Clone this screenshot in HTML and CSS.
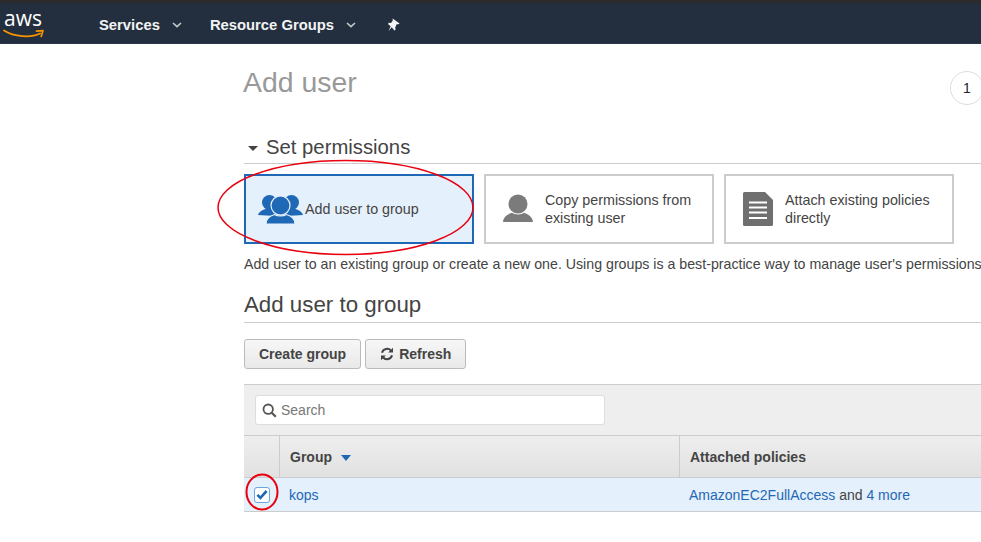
FILE: index.html
```html
<!DOCTYPE html>
<html lang="en">
<head>
    <meta charset="UTF-8">
    <meta name="viewport" content="width=device-width, initial-scale=1.0">
    <title>Add user</title>
    <link rel="stylesheet" href="styles.css">
</head>
<body>

    <nav class="topbar">
        <div class="logo">
            <span class="logo-text">aws</span>
            <svg class="logo-smile" width="42" height="11" viewBox="0 0 42 11">
                <path d="M1 2.5C11 9 28 10 37 5.5" fill="none" stroke="#f79400" stroke-width="1.8" stroke-linecap="round"/>
                <path d="M33.5 3.2L40 2.6L38.2 8.4" fill="none" stroke="#f79400" stroke-width="1.7" stroke-linecap="round" stroke-linejoin="round"/>
            </svg>
        </div>
        <a class="nav-item nav-services">Services
            <svg class="nav-caret" width="10" height="6" viewBox="0 0 10 6"><path d="M1 1l4 3.6L9 1" fill="none" stroke="#c6c9cc" stroke-width="1.6"/></svg>
        </a>
        <a class="nav-item nav-groups">Resource Groups
            <svg class="nav-caret" width="10" height="6" viewBox="0 0 10 6"><path d="M1 1l4 3.6L9 1" fill="none" stroke="#c6c9cc" stroke-width="1.6"/></svg>
        </a>
        <svg class="nav-pin" width="14" height="14" viewBox="0 0 14 14"><path d="M5.6 .6L12.6 5.4L11 6.4L9.8 6L8.2 9.4L8.6 11.6L7.4 12.4L4.7 9.2L1.6 13L3.6 8.2L1 5.9L1.8 4.8L4 5L5.8 2.6z" fill="#f4f5f6"/></svg>
    </nav>

    <main class="content">
        <div class="title-row">
            <h1>Add user</h1>
            <div class="step">1</div>
        </div>

        <h2 class="section-title"><span class="section-caret"></span>Set permissions</h2>

        <div class="options">
            <div class="option option-active">
                <svg class="icon-group" width="45" height="30" viewBox="0 0 45 30">
                    <g fill="#1f68b5">
                        <circle cx="11.500" cy="8.500" r="7.500"/>
                        <circle cx="33.500" cy="8.500" r="7.500"/>
                        <path d="M0 21C1.500 17 5 15.500 9 14.500L15 14.500L22 22L8 21.500z"/>
                        <path d="M45 21C43.500 17 40 15.500 36 14.500L30 14.500L23 22L37 21.500z"/>
                    </g>
                    <circle cx="22.500" cy="11.500" r="9.500" fill="#1f68b5" stroke="#e4f0fb" stroke-width="1.200"/>
                    <path d="M8 30C8 25 11.500 22 16.500 20.500C19.500 22.500 25.500 22.500 28.500 20.500C33.500 22 37 25 37 30z" fill="#1f68b5" stroke="#e4f0fb" stroke-width="1.200"/>
                </svg>
                <span class="option-label-tight">Add user to group</span>
            </div>
            <div class="option">
                <svg class="icon-user" width="30" height="30" viewBox="0 0 30 30">
                    <circle cx="15" cy="10" r="9.500" fill="#7b7b7b"/>
                    <path d="M0 28C.5 23 4 20.500 9 18.700C12 21 18 21 21 18.700C26 20.500 29.500 23 30 28z" fill="#7b7b7b"/>
                </svg>
                <span class="option-label">Copy permissions from existing user</span>
            </div>
            <div class="option">
                <svg class="icon-doc" width="30" height="34" viewBox="0 0 30 34">
                    <path d="M1.500 0H22L30 8V32.500A1.500 1.500 0 0 1 28.500 34H1.500A1.500 1.500 0 0 1 0 32.500V1.500A1.500 1.500 0 0 1 1.500 0z" fill="#6f6f6f"/>
                    <path d="M6 10.500H24M6 15.500H24M6 20.500H24M6 26H24" stroke="#fff" stroke-width="2"/>
                </svg>
                <span class="option-label">Attach existing policies directly</span>
            </div>
        </div>

        <p class="description">Add user to an existing group or create a new one. Using groups is a best-practice way to manage user's permissions</p>

        <h2 class="group-title">Add user to group</h2>

        <div class="actions">
            <button class="btn" type="button">Create group</button>
            <button class="btn" type="button">
                <svg class="icon-refresh" width="14" height="14" viewBox="0 0 14 14"><path d="M2 5.800A5.200 5.200 0 0 1 11 3.600M12 8.200A5.200 5.200 0 0 1 3 10.400" fill="none" stroke="#444" stroke-width="2"/><path d="M13 .8V5.600H8.200zM1 13.200V8.400H5.800z" fill="#444"/></svg>
                Refresh
            </button>
        </div>

        <div class="table">
            <div class="table-toolbar">
                <div class="search">
                    <svg width="15" height="15" viewBox="0 0 15 15"><circle cx="6.200" cy="6.200" r="4.700" fill="none" stroke="#555" stroke-width="1.800"/><path d="M9.700 9.700L13.800 13.800" stroke="#555" stroke-width="2.200"/></svg>
                    <span>Search</span>
                </div>
            </div>
            <div class="table-row table-head">
                <div class="cell cell-check"></div>
                <div class="cell">Group <span class="sort-caret"></span></div>
                <div class="cell">Attached policies</div>
            </div>
            <div class="table-row table-body">
                <div class="cell cell-check">
                    <span class="checkbox">
                        <svg width="12" height="11" viewBox="0 0 12 11"><path d="M1.400 5.800L4.400 8.800L10.600 2" fill="none" stroke="#1f68b5" stroke-width="2.600"/></svg>
                    </span>
                </div>
                <div class="cell"><a class="link">kops</a></div>
                <div class="cell"><a class="link">AmazonEC2FullAccess</a> and <a class="link">4 more</a></div>
            </div>
        </div>
    </main>

    <!-- red marks drawn on top of the screenshot -->
    <svg class="marks" width="981" height="542" viewBox="0 0 981 542">
        <ellipse cx="345.500" cy="207.500" rx="127.500" ry="47" fill="none" stroke="#e8000f" stroke-width="1.500"/>
        <ellipse cx="262" cy="492" rx="15.500" ry="17.500" fill="none" stroke="#e8000f" stroke-width="2"/>
    </svg>

</body>
</html>
```

FILE: styles.css
```css
* {
    margin: 0;
    padding: 0;
    box-sizing: border-box;
}

html, body {
    height: 100%;
    overflow: hidden;
}

body {
    background: #fff;
    color: #444;
    font-family: "Liberation Sans", Arial, sans-serif;
    font-size: 14px;
}

/* top bar */
.topbar {
    display: flex;
    align-items: center;
    height: 44px;
    padding: 3px 0 0 3px;
    background: #232f3e;
    border-top: 3px solid #2b2b2b;
    border-bottom: 1px solid #2a3644;
    color: #f2f3f4;
}

.logo {
    position: relative;
    width: 42px;
    height: 34px;
    margin-bottom: 4px;
}

.logo-text {
    display: block;
    padding-left: 1px;
    font-family: "Open Sans", sans-serif;
    font-size: 21px;
    line-height: 24px;
    color: #fff;
}

.logo-smile {
    display: block;
    margin-top: -2px;
}

.nav-item {
    display: flex;
    align-items: center;
    font-size: 14.800px;
    font-weight: bold;
}

.nav-services {
    margin-left: 54px;
}

.nav-groups {
    margin-left: 28px;
}

.nav-caret {
    margin-left: 12px;
}

.nav-pin {
    margin-left: 31px;
}

/* main column */
.content {
    width: 800px;
    margin-left: 244px;
}

.title-row {
    display: flex;
    align-items: flex-start;
    justify-content: space-between;
    height: 85px;
    padding-top: 21px;
}

h1 {
    margin-left: -1px;
    font-size: 28.400px;
    font-weight: normal;
    line-height: 34px;
    color: #999;
}

.step {
    width: 34px;
    height: 34px;
    margin: 6px 60px 0 0;
    border: 1px solid #ddd;
    border-radius: 50%;
    color: #222;
    font-size: 14px;
    line-height: 32px;
    text-align: center;
}

.section-title {
    display: flex;
    align-items: center;
    height: 35px;
    padding-top: 3px;
    border-bottom: 1px solid #ccc;
    font-size: 20.300px;
    font-weight: normal;
    color: #444;
}

.section-caret {
    width: 0;
    height: 0;
    margin: 2px 8px 0 4px;
    border-top: 5px solid #444;
    border-left: 5px solid transparent;
    border-right: 5px solid transparent;
}

.options {
    display: flex;
    gap: 10px;
    margin-top: 10px;
}

.option {
    display: flex;
    align-items: center;
    width: 230px;
    height: 70px;
    padding-left: 17px;
    border: 2px solid #ccc;
    font-size: 14.300px;
    line-height: 18px;
}

.option-active {
    padding-left: 12px;
    border-color: #1f68b5;
    background: #e4f0fb;
}

.option-label {
    width: 160px;
    margin-left: 12px;
}

.option-label-tight {
    margin-left: 2px;
}

.description {
    margin-top: 12px;
    font-size: 14.200px;
    line-height: 17px;
    white-space: nowrap;
}

.group-title {
    height: 35px;
    margin-top: 15px;
    border-bottom: 1px solid #ccc;
    font-size: 22.300px;
    font-weight: normal;
    line-height: 34px;
}

.actions {
    display: flex;
    gap: 4px;
    margin-top: 16px;
}

.btn {
    display: flex;
    align-items: center;
    gap: 5px;
    height: 30px;
    padding: 0 14px;
    border: 1px solid #bbb;
    border-radius: 3px;
    background: linear-gradient(#f7f7f7, #e9e9e9);
    color: #444;
    font-family: inherit;
    font-size: 14px;
    font-weight: bold;
}

.table {
    margin-top: 15px;
    border-top: 1px solid #ccc;
}

.table-toolbar {
    height: 50px;
    padding: 10px 11px;
    background: #eee;
}

.search {
    display: flex;
    align-items: center;
    gap: 4px;
    width: 350px;
    height: 30px;
    padding-left: 6px;
    background: #fff;
    border: 1px solid #ddd;
    border-radius: 3px;
    color: #777;
}

.table-row {
    display: grid;
    grid-template-columns: 35px 400px 1fr;
}

.table-head {
    height: 43px;
    border-top: 1px solid #ccc;
    border-bottom: 1px solid #ccc;
    background: linear-gradient(#eee, #e1e1e1);
    font-weight: bold;
}

.table-head .cell {
    border-left: 1px solid #ccc;
}

.table-head .cell:first-child {
    border-left: none;
}

.cell {
    display: flex;
    align-items: center;
    padding-left: 10px;
    white-space: pre;
}

.sort-caret {
    width: 0;
    height: 0;
    margin: 2px 0 0 5px;
    border-top: 6px solid #1f68b5;
    border-left: 5px solid transparent;
    border-right: 5px solid transparent;
}

.table-body {
    height: 34px;
    background: #e4f0fb;
    border-bottom: 1px solid #ccc;
}

.table-body .cell-check {
    padding-left: 10px;
}

.checkbox {
    display: flex;
    align-items: center;
    justify-content: center;
    width: 16px;
    height: 16px;
    background: #fff;
    border: 1px solid #6aa5df;
    border-radius: 3px;
}

.link {
    color: #1f68b5;
}

.marks {
    position: absolute;
    top: 0;
    left: 0;
    pointer-events: none;
}
```
